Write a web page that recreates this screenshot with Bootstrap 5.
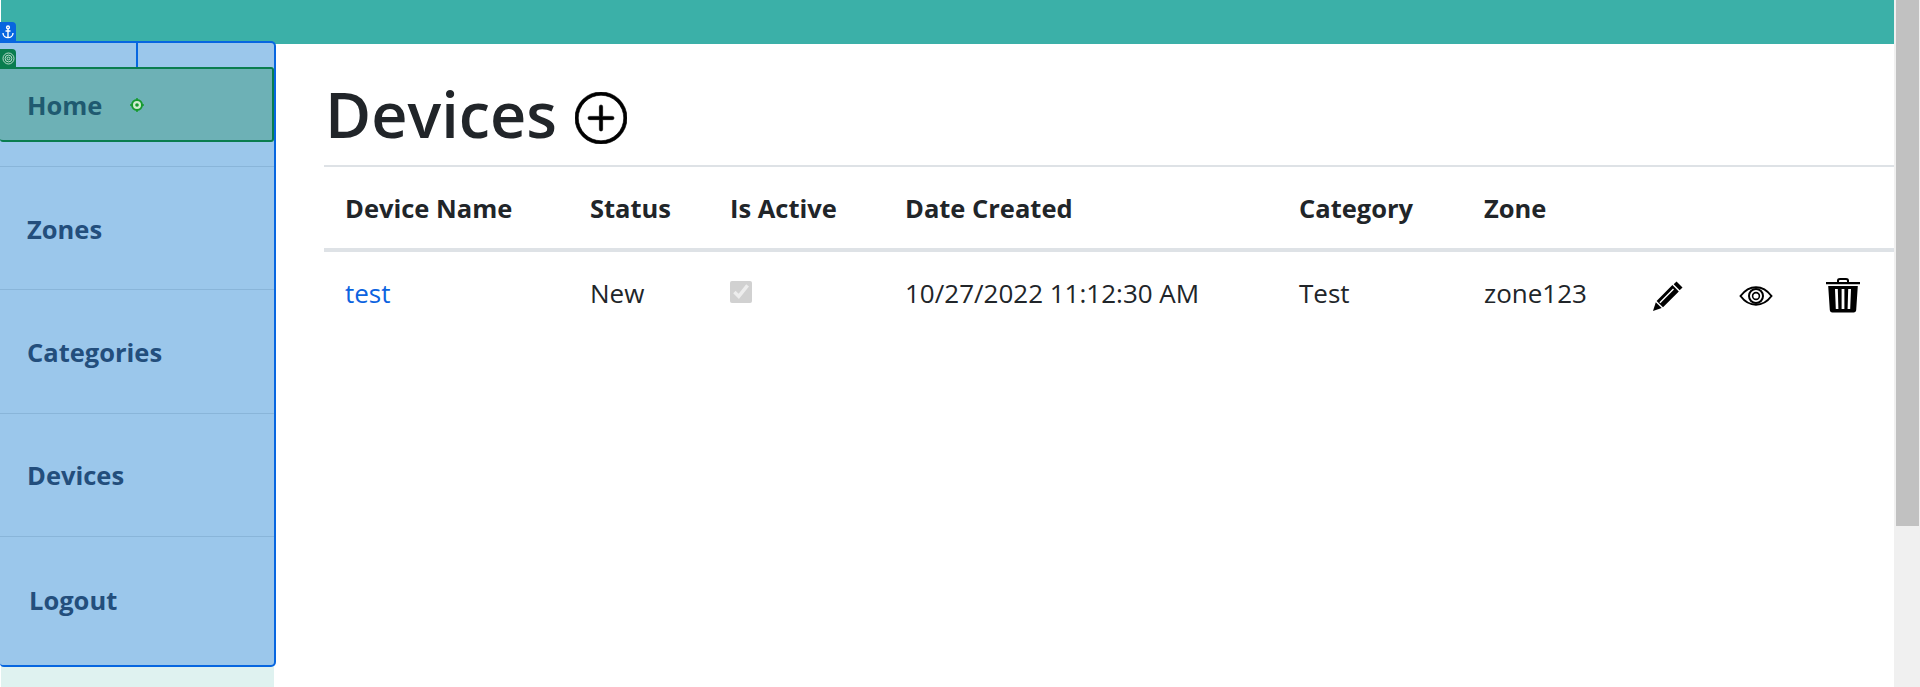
<!DOCTYPE html>
<html lang="en">
<head>
  <meta charset="UTF-8" />
  <title>Devices</title>
  <link href="https://cdn.jsdelivr.net/npm/bootstrap@5.3.0/dist/css/bootstrap.min.css" rel="stylesheet"/>
  <style>
    body { font-family: "Open Sans", "Noto Sans", sans-serif; background: #fff; height: 687px; }
    .app-col { width: 1894px; padding-left: 1px; }
    .top-strip { height: 44px; background: #3bb0a8; }
    .side-col { width: 273px; height: 643px; background: #dff2f0; }
    .side-menu {
      position: relative; width: 276px; height: 626px; margin: -3px 0 0 -1px;
      background: #9bc7eb; border: 2px solid #0766e0; border-left: 0; border-radius: 0 5px 5px 4px;
    }
    .side-menu .nav-item { height: 123.5px; border-bottom: 1px solid #89b5d9; display: flex; align-items: center; }
    .side-menu .nav-item:last-child { height: 130px; }
    .side-menu .nav-link { padding: 1px 0 0 27px; font-size: 25.5px; font-weight: 700; color: #234e7c; }
    .side-menu .nav-item:nth-child(2) .nav-link { padding-top: 3px; }
    .side-menu .nav-item:last-child .nav-link { padding: 0 0 3px 29px; }
    .home-box {
      position: absolute; left: 0; right: 0; top: 24px; height: 75px;
      background: #6db1b6; border: 2px solid #0a7d4f; border-left: 0; border-radius: 0 3px 3px 3px;
      display: flex; align-items: center; padding: 1px 0 0 27px;
      font-size: 25.5px; font-weight: 700; color: #1f5a70;
    }
    .anchor-line { position: absolute; left: 136px; top: 0; width: 2px; height: 25px; background: #0766e0; }
    .debug-tag { position: absolute; left: 0; width: 16px; height: 19px; border-radius: 0 4px 0 0; display: flex; align-items: center; justify-content: center; }
    .tag-blue { top: 22px; background: #0766e0; }
    .tag-green { top: 49px; background: #0a7d4f; height: 18px; }
    .target-mark { position: absolute; left: 129px; top: 28px; }
    .main-col { margin-left: 50px; width: 1570px; }
    .page-title { font-size: 63px; font-weight: 600; color: #212529; margin: 28px 0 0 1px; height: 93px; line-height: 84px; }
    .page-title svg { margin-left: 2px; vertical-align: -6px; stroke: #000; stroke-width: .2; }
    .rule-line { height: 2px; background: #dee2e6; }
    .device-table { font-size: 26px; table-layout: fixed; width: 1570px; color: #212529; }
    .device-table th { height: 83px; padding: 1px 0 0 21px; vertical-align: middle; font-size: 25.5px; font-weight: 700; border-bottom: 4px solid #dee2e6; }
    .device-table td { height: 86px; padding: 0 0 2px 21px; vertical-align: middle; border: 0; }
    .device-table a { color: #0b63e0; text-decoration: none; }
    .device-table input { width: 22px; height: 22px; margin: 0; display: block; margin-top: -2px; }
    .scroll-track { width: 26px; height: 687px; background: #f0f0f0; padding-left: 2px; }
    .scroll-thumb { height: 526px; background: #c1c1c1; margin-right: 1px; }
  </style>
</head>
<body class="d-flex overflow-hidden">
  <div class="app-col">
    <div class="top-strip"></div>
    <div class="d-flex">
      <div class="side-col">
        <div class="side-menu">
          <ul class="nav flex-column">
            <li class="nav-item"><a class="nav-link" href="#">&nbsp;</a></li>
            <li class="nav-item"><a class="nav-link" href="#">Zones</a></li>
            <li class="nav-item"><a class="nav-link" href="#">Categories</a></li>
            <li class="nav-item"><a class="nav-link" href="#">Devices</a></li>
            <li class="nav-item border-0"><a class="nav-link" href="#">Logout</a></li>
          </ul>
          <div class="anchor-line"></div>
          <div class="home-box">Home
            <svg class="target-mark" width="16" height="16" viewBox="0 0 16 16" fill="none">
              <circle cx="8" cy="8" r="5" stroke="#159a2e" stroke-width="2" fill="#cfeccf"/>
              <circle cx="8" cy="8" r="1.8" fill="#159a2e"/>
              <path d="M8 1v2M8 13v2M1 8h2M13 8h2" stroke="#159a2e" stroke-width="1.5"/>
            </svg>
          </div>
        </div>
      </div>
      <div class="main-col">
        <h1 class="page-title">Devices
          <svg width="52" height="52" viewBox="0 0 16 16" fill="#000">
            <path d="M8 15A7 7 0 1 1 8 1a7 7 0 0 1 0 14zm0 1A8 8 0 1 0 8 0a8 8 0 0 0 0 16z"/>
            <path d="M8 4a.5.5 0 0 1 .5.5v3h3a.5.5 0 0 1 0 1h-3v3a.5.5 0 0 1-1 0v-3h-3a.5.5 0 0 1 0-1h3v-3A.5.5 0 0 1 8 4z"/>
          </svg>
        </h1>
        <div class="rule-line"></div>
        <table class="table device-table mb-0">
          <colgroup>
            <col style="width:245px"><col style="width:140px"><col style="width:175px"><col style="width:394px"><col style="width:185px"><col style="width:168px"><col style="width:87px"><col style="width:86px"><col style="width:90px">
          </colgroup>
          <thead>
            <tr><th>Device Name</th><th>Status</th><th>Is Active</th><th>Date Created</th><th>Category</th><th>Zone</th><th></th><th></th><th></th></tr>
          </thead>
          <tbody>
            <tr>
              <td><a href="#">test</a></td>
              <td>New</td>
              <td><input type="checkbox" checked disabled></td>
              <td>10/27/2022 11:12:30 AM</td>
              <td>Test</td>
              <td>zone123</td>
              <td>
                <svg width="32" height="32" viewBox="0 0 32 32" fill="#000">
                  <path d="M24.5 1.5l6 6-2.8 2.8-6-6z"/>
                  <path d="M20.4 5.1l6.4 6.4L11 27.3 4.6 20.9zM21 8.6L7.4 22.2l1 1L22 9.6z" fill-rule="evenodd"/>
                  <path d="M3.8 22.2l5.9 5.9L1 31z"/>
                </svg>
              </td>
              <td>
                <svg width="34" height="20" viewBox="0 0 34 20" fill="none" stroke="#000">
                  <path d="M1.5 10C6 4 11 1.2 17 1.2S28 4 32.5 10C28 16 23 18.8 17 18.8S6 16 1.5 10z" stroke-width="2"/>
                  <circle cx="17" cy="10" r="7" stroke-width="2"/>
                  <circle cx="17" cy="10" r="3.4" stroke-width="1.6"/>
                </svg>
              </td>
              <td>
                <svg width="36" height="36" viewBox="0 0 36 36" fill="#000">
                  <path d="M1 5h34v2.2H1zM12 5V3.5C12 1.8 13.2 1 15 1h6c1.8 0 3 .8 3 2.5V5h-2V3.8c0-.5-.4-.8-1-.8h-6c-.6 0-1 .3-1 .8V5z"/>
                  <path d="M3.2 9h29.6l-1.6 24c-.1 1.5-1 2.5-2.6 2.5H7.4c-1.6 0-2.5-1-2.6-2.5zM10 12l.8 20h2.6L12.8 12zM16.6 12v20h2.8V12zM23.2 12l-.6 20h2.6l.8-20z" fill-rule="evenodd"/>
                </svg>
              </td>
            </tr>
          </tbody>
        </table>
      </div>
    </div>
  </div>
  <div class="scroll-track"><div class="scroll-thumb"></div></div>

  <div class="debug-tag tag-blue">
    <svg width="12" height="14" viewBox="0 0 12 14" fill="none" stroke="#fff" stroke-width="1.4">
      <circle cx="6" cy="2.4" r="1.4"/><path d="M6 3.8V13M3.5 6h5M1 8c0 3 2.5 4.6 5 4.6S11 11 11 8"/>
    </svg>
  </div>
  <div class="debug-tag tag-green">
    <svg width="13" height="13" viewBox="0 0 13 13" fill="none" stroke="#b9dccb">
      <circle cx="6.5" cy="6.5" r="5.5"/><circle cx="6.5" cy="6.5" r="3.4"/><circle cx="6.5" cy="6.5" r="1.4"/>
    </svg>
  </div>
</body>
</html>
